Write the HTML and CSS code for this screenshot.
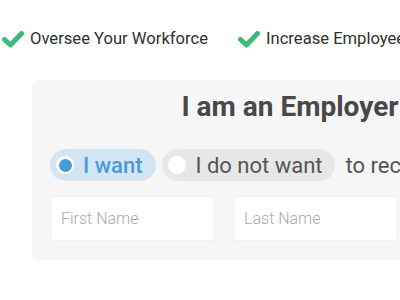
FILE: index.html
```html
<!DOCTYPE html>
<html>
<head>
<meta charset="utf-8">
<link rel="stylesheet" href="styles.css">
</head>
<body>
<div class="page">
  <ul class="features">
    <li class="feature">
      <svg class="check" width="22" height="17" viewBox="0 0 22 17"><polyline points="2.5,8.5 8.5,14 19.5,2.5" fill="none" stroke="#3dba7a" stroke-width="5" stroke-linecap="round" stroke-linejoin="round"/></svg>
      <span>Oversee Your Workforce</span>
    </li>
    <li class="feature">
      <svg class="check" width="22" height="17" viewBox="0 0 22 17"><polyline points="2.5,8.5 8.5,14 19.5,2.5" fill="none" stroke="#3dba7a" stroke-width="5" stroke-linecap="round" stroke-linejoin="round"/></svg>
      <span>Increase Employee Engagement</span>
    </li>
  </ul>
  <section class="panel">
    <h1 class="title">I am an Employer</h1>
    <div class="choice-row">
      <label class="pill pill-on"><span class="radio"><span class="dot"></span></span><span class="pill-text">I want</span></label>
      <label class="pill pill-off"><span class="radio"></span><span class="pill-text">I do not want</span></label>
      <span class="rest">to receive updates</span>
    </div>
    <div class="fields">
      <div class="field">First Name</div>
      <div class="field">Last Name</div>
    </div>
  </section>
</div>
</body>
</html>
```
FILE: styles.css
```css
html, body {
  margin: 0;
  padding: 0;
  background: #ffffff;
  overflow: hidden;
}
body {
  font-family: Roboto, "Liberation Sans", sans-serif;
  color: #333;
}
.page {
  width: 700px;
}
.features {
  list-style: none;
  margin: 0;
  padding: 30px 0 0 2px;
  display: flex;
  gap: 30px;
}
.feature {
  display: flex;
  align-items: center;
  gap: 6px;
  font-size: 16.6px;
  line-height: 18px;
  color: #2f2f2f;
  white-space: nowrap;
}
.check {
  display: block;
}
.panel {
  margin: 32px 0 0 32px;
  width: 514px;
  background: #f6f6f6;
  border-radius: 6px;
  padding: 9px 18px 19px;
}
.title {
  margin: 0;
  text-align: center;
  font-size: 28px;
  line-height: 36px;
  font-weight: 700;
  color: #484848;
  padding-right: 34px;
}
.choice-row {
  margin-top: 24px;
  display: flex;
  align-items: center;
  gap: 6px;
  white-space: nowrap;
}
.pill {
  display: inline-flex;
  align-items: center;
  height: 32px;
  border-radius: 16px;
  padding: 0 12px 0 6px;
  gap: 9px;
  font-size: 22px;
}
.pill-on {
  background: #d3e5f5;
  color: #4a9ad8;
  font-weight: 500;
  padding-right: 14px;
}
.pill-off {
  background: #e7e7e7;
  color: #555;
  padding-right: 12px;
}
.radio {
  width: 18px;
  height: 18px;
  border-radius: 50%;
  background: #fff;
  display: flex;
  align-items: center;
  justify-content: center;
}
.dot {
  width: 13px;
  height: 13px;
  border-radius: 50%;
  background: #4a9ad8;
}
.rest {
  margin-left: 5px;
  font-size: 22px;
  color: #555;
}
.fields {
  margin-top: 15px;
  display: flex;
  gap: 18px;
}
.field {
  width: 165px;
  height: 45px;
  box-sizing: border-box;
  padding-left: 10px;
  display: flex;
  align-items: center;
  background: #fff;
  border: 1px solid #efefef;
  border-radius: 3px;
  font-size: 16px;
  font-weight: 300;
  color: #a8a8a8;
}
```
